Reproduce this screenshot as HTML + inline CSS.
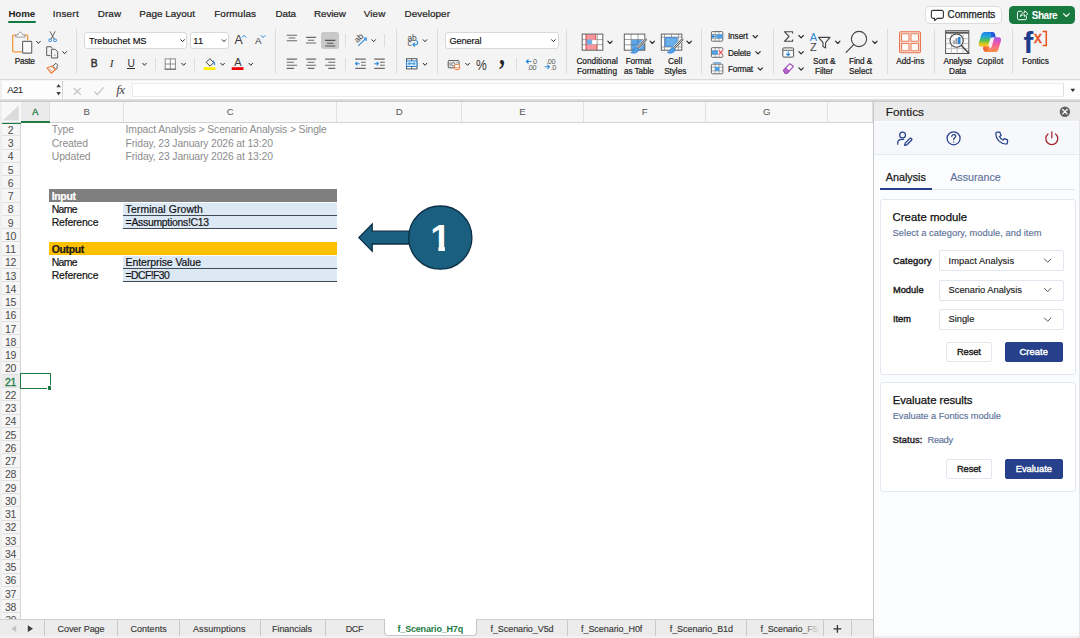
<!DOCTYPE html>
<html lang="en">
<head>
<meta charset="utf-8">
<title>Fontics – Excel</title>
<style>
*{box-sizing:border-box;margin:0;padding:0}
html,body{width:1080px;height:638px;overflow:hidden;background:#f4f4f4}
body{font-family:"Liberation Sans",sans-serif;font-size:11px;color:#222;position:relative}
.abs{position:absolute}
.t{position:absolute;white-space:nowrap;line-height:1}
svg{position:absolute;overflow:visible}
/* tab row */
.mtab{position:absolute;top:8px;font-size:11px;line-height:12px;color:#1f1f1f;letter-spacing:.1px;white-space:nowrap}
/* ribbon */
.sep{position:absolute;top:30px;width:1px;height:44px;background:#dcdcdc}
.box{position:absolute;background:#fff;border:1px solid #d9d9d9;border-radius:3px;height:18px;top:32px;font-size:10px;line-height:16px;padding-left:4px;color:#111}
.lbl{position:absolute;font-size:8.6px;line-height:9.5px;text-align:center;color:#1a1a1a;white-space:nowrap;transform:translateX(-50%);letter-spacing:.05px}
.sm{position:absolute;font-size:8.6px;line-height:10px;color:#1a1a1a;white-space:nowrap}
/* grid */
.ch{position:absolute;top:101.800px;height:20.600px;font-size:9.700px;line-height:20.600px;text-align:center;color:#555;border-right:1px solid #e0e0e0;padding-left:.6px}
.rh{position:absolute;left:2.200px;width:18.400px;height:13.250px;font-size:9.200px;line-height:15.700px;text-align:center;color:#4a4a4a;overflow:hidden}
.c{position:absolute;white-space:nowrap;font-size:10.7px;line-height:13.25px;height:13.25px;color:#000}
.g{color:#8c8c8c}
/* sheet tabs */
.st{position:absolute;top:620px;height:17px;font-size:9.5px;line-height:17px;text-align:center;color:#3a3a3a;border-right:1px solid #c9c9c9;white-space:nowrap}
/* panel */
.card{position:absolute;background:#fff;border:1px solid #e3e7ef;border-radius:3px}
.sel{position:absolute;left:940px;width:124px;height:21px;background:#fff;border:1px solid #e2e6ee;border-radius:2px;font-size:9.4px;line-height:19px;padding-left:8px;color:#1b1b1b}
.flab{position:absolute;left:893px;font-size:9.4px;font-weight:bold;color:#1b1b1b;line-height:11px;letter-spacing:-.1px}
.btn{position:absolute;height:21px;border-radius:2px;font-size:9.4px;font-weight:bold;line-height:19px;text-align:center}
.btn.w{background:#fff;border:1px solid #e2e6ee;color:#1b1b1b}
.btn.p{background:#26408b;border:1px solid #26408b;color:#fff}
</style>
</head>
<body>

<div class="abs" style="left:0;top:0;width:1080px;height:79.300px;background:#f4f4f4"></div>
<div class="t" id="f_mt_Home" style="left:8.40px;top:9.11px;font-size:9.7px;letter-spacing:-0.055px;color:#1f1f1f;font-weight:bold;">Home</div>
<div class="t" id="f_mt_Insert" style="left:52.70px;top:9.10px;font-size:9.9px;letter-spacing:0.249px;color:#1f1f1f;-webkit-text-stroke:.22px #1f1f1f;">Insert</div>
<div class="t" id="f_mt_Draw" style="left:97.80px;top:9.10px;font-size:9.9px;letter-spacing:0.063px;color:#1f1f1f;-webkit-text-stroke:.22px #1f1f1f;">Draw</div>
<div class="t" id="f_mt_PageLayout" style="left:139.30px;top:9.10px;font-size:9.9px;letter-spacing:0.030px;color:#1f1f1f;-webkit-text-stroke:.22px #1f1f1f;">Page Layout</div>
<div class="t" id="f_mt_Formulas" style="left:214.25px;top:9.10px;font-size:9.9px;letter-spacing:0.074px;color:#1f1f1f;-webkit-text-stroke:.22px #1f1f1f;">Formulas</div>
<div class="t" id="f_mt_Data" style="left:275.50px;top:9.10px;font-size:9.9px;letter-spacing:-0.090px;color:#1f1f1f;-webkit-text-stroke:.22px #1f1f1f;">Data</div>
<div class="t" id="f_mt_Review" style="left:314.00px;top:9.10px;font-size:9.9px;letter-spacing:-0.107px;color:#1f1f1f;-webkit-text-stroke:.22px #1f1f1f;">Review</div>
<div class="t" id="f_mt_View" style="left:363.75px;top:9.10px;font-size:9.9px;letter-spacing:0.129px;color:#1f1f1f;-webkit-text-stroke:.22px #1f1f1f;">View</div>
<div class="t" id="f_mt_Developer" style="left:404.50px;top:9.10px;font-size:9.9px;letter-spacing:0.054px;color:#1f1f1f;-webkit-text-stroke:.22px #1f1f1f;">Developer</div>
<div class="abs" style="left:8.300px;top:21.400px;width:27.400px;height:2.100px;background:#107c41;border-radius:1px"></div>
<div class="abs" style="left:924.500px;top:6px;width:77.300px;height:17.700px;background:#fff;border:1px solid #dcdcdc;border-radius:5px"></div>
<div class="t" id="f_comments" style="left:947.60px;top:10.41px;font-size:10px;letter-spacing:-0.082px;color:#1b1b1b;-webkit-text-stroke:.25px #1b1b1b">Comments</div>
<div class="abs" style="left:1009px;top:6px;width:65.800px;height:17.700px;background:#197a40;border-radius:4.500px"></div>
<div class="t" id="f_share" style="left:1031.70px;top:10.50px;font-size:10px;letter-spacing:-0.459px;font-weight:bold;color:#fff">Share</div>
<div class="t" id="f_l_paste" style="left:14.80px;top:58.11px;font-size:8.25px;letter-spacing:-0.242px;color:#1a1a1a;-webkit-text-stroke:.2px #1a1a1a">Paste</div>
<div class="t" id="f_l_cond" style="left:576.40px;top:58.30px;font-size:8.25px;letter-spacing:0.020px;color:#1a1a1a;-webkit-text-stroke:.2px #1a1a1a">Conditional</div>
<div class="t" id="f_l_formg" style="left:576.90px;top:67.61px;font-size:8.25px;letter-spacing:0.076px;color:#1a1a1a;-webkit-text-stroke:.2px #1a1a1a">Formatting</div>
<div class="t" id="f_l_fmt" style="left:625.70px;top:58.30px;font-size:8.25px;letter-spacing:-0.107px;color:#1a1a1a;-webkit-text-stroke:.2px #1a1a1a">Format</div>
<div class="t" id="f_l_astab" style="left:624.00px;top:67.61px;font-size:8.25px;letter-spacing:-0.099px;color:#1a1a1a;-webkit-text-stroke:.2px #1a1a1a">as Table</div>
<div class="t" id="f_l_cell" style="left:668.00px;top:58.30px;font-size:8.25px;letter-spacing:0.020px;color:#1a1a1a;-webkit-text-stroke:.2px #1a1a1a">Cell</div>
<div class="t" id="f_l_styles" style="left:664.20px;top:67.61px;font-size:8.25px;letter-spacing:-0.078px;color:#1a1a1a;-webkit-text-stroke:.2px #1a1a1a">Styles</div>
<div class="t" id="f_l_sort" style="left:813.00px;top:58.30px;font-size:8.25px;letter-spacing:-0.073px;color:#1a1a1a;-webkit-text-stroke:.2px #1a1a1a">Sort &amp;</div>
<div class="t" id="f_l_filter" style="left:815.10px;top:67.61px;font-size:8.25px;letter-spacing:-0.091px;color:#1a1a1a;-webkit-text-stroke:.2px #1a1a1a">Filter</div>
<div class="t" id="f_l_find" style="left:849.00px;top:58.30px;font-size:8.25px;letter-spacing:-0.141px;color:#1a1a1a;-webkit-text-stroke:.2px #1a1a1a">Find &amp;</div>
<div class="t" id="f_l_select" style="left:849.00px;top:67.61px;font-size:8.25px;letter-spacing:0.010px;color:#1a1a1a;-webkit-text-stroke:.2px #1a1a1a">Select</div>
<div class="t" id="f_l_addins" style="left:896.20px;top:58.30px;font-size:8.25px;letter-spacing:0.031px;color:#1a1a1a;-webkit-text-stroke:.2px #1a1a1a">Add-ins</div>
<div class="t" id="f_l_analyse" style="left:943.60px;top:58.30px;font-size:8.25px;letter-spacing:-0.166px;color:#1a1a1a;-webkit-text-stroke:.2px #1a1a1a">Analyse</div>
<div class="t" id="f_l_data" style="left:949.10px;top:67.61px;font-size:8.25px;letter-spacing:-0.159px;color:#1a1a1a;-webkit-text-stroke:.2px #1a1a1a">Data</div>
<div class="t" id="f_l_copilot" style="left:977.00px;top:58.30px;font-size:8.25px;letter-spacing:0.088px;color:#1a1a1a;-webkit-text-stroke:.2px #1a1a1a">Copilot</div>
<div class="t" id="f_l_fontics" style="left:1022.30px;top:58.30px;font-size:8.25px;letter-spacing:-0.013px;color:#1a1a1a;-webkit-text-stroke:.2px #1a1a1a">Fontics</div>
<div class="t" id="f_l_ins" style="left:727.90px;top:33.41px;font-size:8.25px;letter-spacing:-0.090px;color:#1a1a1a;-webkit-text-stroke:.2px #1a1a1a">Insert</div>
<div class="t" id="f_l_del" style="left:727.90px;top:49.61px;font-size:8.25px;letter-spacing:-0.193px;color:#1a1a1a;-webkit-text-stroke:.2px #1a1a1a">Delete</div>
<div class="t" id="f_l_fmt2" style="left:727.90px;top:65.80px;font-size:8.25px;letter-spacing:-0.190px;color:#1a1a1a;-webkit-text-stroke:.2px #1a1a1a">Format</div>
<div class="box" style="left:84.400px;width:103px;height:17.600px;top:31.700px"></div>
<div class="box" style="left:189.800px;width:39.200px;height:17.600px;top:31.700px"></div>
<div class="box" style="left:445.100px;width:113.800px;height:17.600px;top:31.700px"></div>
<div class="t" id="f_treb" style="left:89.00px;top:36.61px;font-size:9.3px;letter-spacing:-0.046px;color:#111;-webkit-text-stroke:.15px #111">Trebuchet MS</div>
<div class="t" id="f_eleven" style="left:193.20px;top:36.61px;font-size:9.3px;letter-spacing:0.322px;color:#111;-webkit-text-stroke:.15px #111">11</div>
<div class="t" id="f_general" style="left:449.50px;top:36.61px;font-size:9.3px;letter-spacing:-0.168px;color:#111;-webkit-text-stroke:.15px #111">General</div>
<div class="t" id="f_bB" style="left:90.70px;top:58.80px;font-size:10.3px;letter-spacing:-1.175px;color:#333;-webkit-text-stroke:.45px #333">B</div>
<div class="t" id="f_bI" style="left:109.80px;top:57.81px;font-size:11.4px;letter-spacing:1.103px;color:#333;font-style:italic;font-family:'Liberation Serif',serif">I</div>
<div class="t" id="f_bU" style="left:127.50px;top:58.80px;font-size:10.3px;letter-spacing:-0.338px;color:#333">U</div>
<div class="abs" style="left:127.400px;top:68px;width:7.200px;height:1px;background:#333"></div>
<div class="t" id="f_bA1" style="left:234.60px;top:33.71px;font-size:12.3px;letter-spacing:-0.603px;color:#3a3a3a">A</div>
<div class="t" id="f_bA2" style="left:254.90px;top:35.71px;font-size:9.8px;letter-spacing:-0.147px;color:#3a3a3a">A</div>
<div class="t" id="f_bA3" style="left:234.20px;top:57.30px;font-size:11px;letter-spacing:-0.244px;color:#3a3a3a">A</div>
<div class="t" id="f_bpct" style="left:476.40px;top:57.50px;font-size:14.8px;letter-spacing:-0.101px;color:#3a3a3a;transform:scaleX(.82);transform-origin:left">%</div>
<div class="t" id="f_bcomma" style="left:498.30px;top:59.11px;font-size:26px;letter-spacing:-1.531px;transform:scale(.88,1.120);transform-origin:left bottom;color:#222;font-weight:bold;font-family:'Liberation Serif',serif">’</div>
<div class="sep" style="left:76.2px;top:28.5px;height:45px"></div>
<div class="sep" style="left:275.2px;top:28.5px;height:45px"></div>
<div class="sep" style="left:396.3px;top:28.5px;height:45px"></div>
<div class="sep" style="left:437px;top:28.5px;height:45px"></div>
<div class="sep" style="left:566.3px;top:28.5px;height:45px"></div>
<div class="sep" style="left:700.8px;top:28.5px;height:45px"></div>
<div class="sep" style="left:772.5px;top:28.5px;height:45px"></div>
<div class="sep" style="left:886.8px;top:28.5px;height:45px"></div>
<div class="sep" style="left:934.3px;top:28.5px;height:45px"></div>
<div class="sep" style="left:1012.4px;top:28.5px;height:45px"></div>
<div class="sep" style="left:155.2px;top:58px;height:12.5px"></div>
<div class="sep" style="left:194.1px;top:58px;height:12.5px"></div>
<div class="sep" style="left:345.2px;top:34.3px;height:12.5px"></div>
<div class="sep" style="left:345.2px;top:58px;height:12.5px"></div>
<div class="sep" style="left:384.1px;top:34.3px;height:12.5px"></div>
<div class="sep" style="left:515.7px;top:58px;height:12.5px"></div>
<div class="abs" style="left:321.4px;top:32px;width:17.7px;height:17.1px;background:#c9c9c9;border-radius:2.5px"></div>
<svg width="1080" height="80" viewBox="0 0 1080 80" style="left:0;top:0">
<path d="M933 10.4h8.8a1.6 1.6 0 0 1 1.6 1.6v4.8a1.6 1.6 0 0 1-1.6 1.6h-4.6l-2.6 2.2v-2.2h-1.6a1.6 1.6 0 0 1-1.6-1.6v-4.8a1.6 1.6 0 0 1 1.6-1.6z" fill="none" stroke="#333" stroke-width="1.1" stroke-linejoin="round"/>
<path d="M1021.5 11.3h-2.6a1.4 1.4 0 0 0-1.4 1.4v5.6a1.4 1.4 0 0 0 1.4 1.4h6.2a1.4 1.4 0 0 0 1.4-1.4v-1.6" fill="none" stroke="#fff" stroke-width="1" stroke-linecap="round"/>
<path d="M1020.3 16.6c.4-2.6 2-3.9 4.3-4v-1.9l3.3 3-3.3 3v-1.9c-1.8 0-3.200.5-4.300 1.800z" fill="none" stroke="#fff" stroke-width=".9" stroke-linejoin="round"/>
<path d="M1063.5 13.6l2.90 2.90l2.90 -2.90" fill="none" stroke="#fff" stroke-width="1.1" stroke-linecap="round" stroke-linejoin="round"/>
<path d="M16.600 35.200h-3.200a.7.7 0 0 0-.7.7v15.200a.7.7 0 0 0 .7.7h8.400M24.200 35.200h2.800a.7.7 0 0 1 .7.7v4.200" fill="none" stroke="#f2993f" stroke-width="1.300"/>
<path d="M15.700 37.100v-2.300h2.400c.2-1.700 1.100-2.600 2.200-2.600s2 .9 2.200 2.600h2.400v2.300z" fill="#f8f8f8" stroke="#8e8e8e" stroke-width=".85" stroke-linejoin="round"/>
<rect x="22.600" y="41.300" width="9.100" height="11.900" rx=".7" fill="#fafafa" stroke="#6a6a6a" stroke-width="1.150"/>
<path d="M36.6 41.4l1.80 2.00l1.80 -2.00" fill="none" stroke="#2a2a2a" stroke-width="1.0" stroke-linecap="round" stroke-linejoin="round"/>
<path d="M50 31.400l4.200 7.700M55.200 31.400l-4.200 7.700" fill="none" stroke="#555" stroke-width=".95"/>
<ellipse cx="50.100" cy="40.300" rx="1.500" ry="1.300" fill="none" stroke="#2b88d8" stroke-width=".95"/><ellipse cx="55.100" cy="40.300" rx="1.500" ry="1.300" fill="none" stroke="#2b88d8" stroke-width=".95"/>
<path d="M50.300 55.600h-3.600v-8.800h4.500l1.400 1.400" fill="none" stroke="#5a5a5a" stroke-width="1"/>
<path d="M51.400 49.300h3.700l2.600 2.600v6.100h-6.300z" fill="#f4f4f4" stroke="#5a5a5a" stroke-width="1" stroke-linejoin="round"/><path d="M53.900 55.200h1.800M54.800 54.300v1.800" stroke="#aaa" stroke-width=".7"/>
<path d="M62.8 51.7l1.80 2.00l1.80 -2.00" fill="none" stroke="#2a2a2a" stroke-width="1.0" stroke-linecap="round" stroke-linejoin="round"/>
<path d="M52.600 66.200l3.300-3 2.100 2.300-1.400 1.200.9 1.500-1.500 1.300z" fill="#f4f4f4" stroke="#4a4a4a" stroke-width=".9" stroke-linejoin="round"/>
<path d="M47 68l5-1.900 3.400 3.700-4.200 3.400z" fill="none" stroke="#f0793a" stroke-width="1.100" stroke-linejoin="round"/><path d="M49.500 69l2.600 2.600" stroke="#f0793a" stroke-width=".7"/>
<path d="M180.8 39.7l1.80 2.00l1.80 -2.00" fill="none" stroke="#2a2a2a" stroke-width="1.0" stroke-linecap="round" stroke-linejoin="round"/>
<path d="M222.2 39.7l1.80 2.00l1.80 -2.00" fill="none" stroke="#2a2a2a" stroke-width="1.0" stroke-linecap="round" stroke-linejoin="round"/>
<path d="M551.6 39.7l1.80 2.00l1.80 -2.00" fill="none" stroke="#2a2a2a" stroke-width="1.0" stroke-linecap="round" stroke-linejoin="round"/>
<path d="M242.200 37.300l1.900-2 1.900 2" fill="none" stroke="#2b88d8" stroke-width="1" stroke-linecap="round" stroke-linejoin="round"/>
<path d="M261.200 35.600l1.900 2 1.900-2" fill="none" stroke="#2b88d8" stroke-width="1" stroke-linecap="round" stroke-linejoin="round"/>
<path d="M142.7 63.3l1.80 2.00l1.80 -2.00" fill="none" stroke="#2a2a2a" stroke-width="1.0" stroke-linecap="round" stroke-linejoin="round"/>
<rect x="165.200" y="58.900" width="10.200" height="10.200" fill="#fdfdfd" stroke="#8a8a8a" stroke-width="1"/><path d="M170.300 58.900v10.200M165.200 64h10.200" stroke="#8a8a8a" stroke-width="1"/><path d="M164.700 69.300h11.200" stroke="#777" stroke-width="1.200"/>
<path d="M181.8 63.3l1.80 2.00l1.80 -2.00" fill="none" stroke="#2a2a2a" stroke-width="1.0" stroke-linecap="round" stroke-linejoin="round"/>
<path d="M209.800 58.700l3.900 3.900-3.600 3.600-3.900-3.900z" fill="none" stroke="#444" stroke-width="1" stroke-linejoin="round"/>
<path d="M213.300 61.200c1 .8 1.400 1.800 1.200 3.300" fill="none" stroke="#2b88d8" stroke-width="1.300" stroke-linecap="round"/>
<rect x="203.700" y="67.200" width="11.700" height="2.800" fill="#ffef00"/>
<path d="M220.8 63.3l1.80 2.00l1.80 -2.00" fill="none" stroke="#2a2a2a" stroke-width="1.0" stroke-linecap="round" stroke-linejoin="round"/>
<rect x="231.700" y="67.200" width="11.800" height="2.800" fill="#f00000"/>
<path d="M249.0 63.3l1.80 2.00l1.80 -2.00" fill="none" stroke="#2a2a2a" stroke-width="1.0" stroke-linecap="round" stroke-linejoin="round"/>
<path d="M286.7 35.3H297.1M288.6 38.0H295.3M286.7 40.8H297.1" stroke="#6a6a6a" stroke-width="1.1" fill="none"/>
<path d="M306.0 37.4H316.1M307.9 40.2H314.3M306.0 43.0H316.1" stroke="#6a6a6a" stroke-width="1.1" fill="none"/>
<path d="M325.1 40.4H335.3M326.9 43.2H333.6M325.1 46.0H335.3" stroke="#555" stroke-width="1.1" fill="none"/>
<path d="M286.7 59.1H297.1M286.7 62.2H294.0M286.7 65.3H297.1M286.7 68.4H294.0" stroke="#6a6a6a" stroke-width="1.1" fill="none"/>
<path d="M306.0 59.1H316.1M307.7 62.2H314.4M306.0 65.3H316.1M307.7 68.4H314.4" stroke="#6a6a6a" stroke-width="1.1" fill="none"/>
<path d="M325.1 59.1H335.3M328.2 62.2H335.3M325.1 65.3H335.3M328.2 68.4H335.3" stroke="#6a6a6a" stroke-width="1.1" fill="none"/>
<text x="0" y="0" transform="translate(357.600 43.300) rotate(-47)" font-size="8.400" fill="#444" font-family="Liberation Sans, sans-serif">ab</text>
<path d="M358.200 45.800l7.800-7.500" stroke="#2b88d8" stroke-width="1.050" fill="none"/><path d="M363.300 38l3-.1-.1 3" stroke="#2b88d8" stroke-width="1.050" fill="none" stroke-linejoin="round"/>
<path d="M371.9 39.7l1.80 2.00l1.80 -2.00" fill="none" stroke="#2a2a2a" stroke-width="1.0" stroke-linecap="round" stroke-linejoin="round"/>
<path d="M355.2 59.1H365.8M361.0 62.2H365.8M361.0 65.3H365.8M355.2 68.4H365.8" stroke="#6a6a6a" stroke-width="1.1" fill="none"/><path d="M359.7 63.75H355.5M357.3 62.0l-1.800 1.700 1.800 1.700" stroke="#2b88d8" stroke-width="1.100" fill="none" stroke-linejoin="round"/>
<path d="M374.2 59.1H384.8M380.0 62.2H384.8M380.0 65.3H384.8M374.2 68.4H384.8" stroke="#6a6a6a" stroke-width="1.1" fill="none"/><path d="M374.2 63.75H378.5M376.7 62.0l1.800 1.700-1.800 1.700" stroke="#2b88d8" stroke-width="1.100" fill="none" stroke-linejoin="round"/>
<text x="407.400" y="40.600" font-size="8.400" fill="#444" font-family="Liberation Sans, sans-serif">ab</text><text x="407.400" y="46.300" font-size="8.400" fill="#444" font-family="Liberation Sans, sans-serif">c</text>
<path d="M416.600 40.800c1.600.7 1.700 3.600-.6 3.900h-3M414.600 43l-1.700 1.700 1.700 1.700" stroke="#2b88d8" stroke-width="1.100" fill="none" stroke-linejoin="round" stroke-linecap="round"/>
<path d="M423.2 39.7l1.80 2.00l1.80 -2.00" fill="none" stroke="#2a2a2a" stroke-width="1.0" stroke-linecap="round" stroke-linejoin="round"/>
<rect x="406.500" y="58.700" width="10.400" height="10.200" fill="#fdfdfd" stroke="#555" stroke-width="1"/>
<rect x="406.500" y="60.900" width="10.400" height="5.600" fill="#d6e8f8" stroke="#2b88d8" stroke-width="1"/>
<path d="M408.400 63.700h6.600M409.800 62.300l-1.400 1.400 1.400 1.400M413.600 62.300l1.400 1.400-1.400 1.400" stroke="#2b88d8" stroke-width=".9" fill="none"/>
<path d="M411.700 58.700v2.200M411.700 66.500v2.400" stroke="#555" stroke-width=".9"/>
<path d="M423.2 63.3l1.80 2.00l1.80 -2.00" fill="none" stroke="#2a2a2a" stroke-width="1.0" stroke-linecap="round" stroke-linejoin="round"/>
<rect x="448.200" y="60.600" width="10.800" height="7.200" rx=".8" fill="none" stroke="#555" stroke-width="1"/><circle cx="453.200" cy="64.200" r="1.700" fill="none" stroke="#555" stroke-width=".8"/><path d="M450 62.200v4M457 62.200v1" stroke="#555" stroke-width=".7"/>
<path d="M454.600 65.300c0-1.300 5-1.300 5 0v3.500c0 1.300-5 1.300-5 0z" fill="#fff" stroke="#f0793a" stroke-width="1"/><path d="M454.600 67c0 1.200 5 1.200 5 0" fill="none" stroke="#f0793a" stroke-width=".9"/>
<path d="M465.6 63.2l2.00 2.10l2.00 -2.10" fill="none" stroke="#2a2a2a" stroke-width="1" stroke-linecap="round" stroke-linejoin="round"/>
<path d="M531.400 61.500h-4.800M528.500 59.500l-2.100 2 2.100 2" stroke="#2b88d8" stroke-width="1.100" fill="none" stroke-linejoin="round"/>
<text x="533.100" y="63.700" font-size="7.300" fill="#5a5a5a" font-family="Liberation Sans, sans-serif" letter-spacing="-.45">0</text><text x="527.300" y="69.600" font-size="7.300" fill="#5a5a5a" font-family="Liberation Sans, sans-serif" letter-spacing="-.45">.00</text>
<path d="M544.600 66.800h4.800M547.400 64.800l2.100 2-2.100 2" stroke="#2b88d8" stroke-width="1.100" fill="none" stroke-linejoin="round"/>
<text x="546.300" y="63.700" font-size="7.300" fill="#5a5a5a" font-family="Liberation Sans, sans-serif" letter-spacing="-.45">.00</text><text x="550.800" y="69.600" font-size="7.300" fill="#5a5a5a" font-family="Liberation Sans, sans-serif" letter-spacing="-.45">.0</text>
<rect x="582.2" y="34.1" width="20.6" height="16.1" fill="#fff"/>
<path d="M586.1 34.1V50.2M591.7 34.1V50.2M597.2 34.1V50.2M582.2 39.6H602.8M582.2 44.7H602.8" stroke="#8c8c8c" stroke-width=".8" fill="none"/>
<rect x="586.1" y="34.5" width="9.500" height="5.1" fill="#f9949c"/>
<rect x="586.1" y="39.6" width="5.600" height="5.1" fill="#6aaeea"/>
<rect x="586.1" y="44.7" width="10.600" height="5.1" fill="#f9949c"/>
<path d="M586.1 34.1V50.2M595.6 34.1V39.6M596.7 44.7V50.2" stroke="#e8473f" stroke-width=".9" fill="none"/>
<rect x="582.2" y="34.1" width="20.6" height="16.1" fill="none" stroke="#5f5f5f" stroke-width="1"/>
<path d="M607.8 41.2l2.20 2.30l2.20 -2.30" fill="none" stroke="#2a2a2a" stroke-width="1.15" stroke-linecap="round" stroke-linejoin="round"/>
<rect x="624.3" y="34.1" width="20.5" height="16.1" fill="#fff"/>
<rect x="631.1" y="39.5" width="13.7" height="10.7" fill="#5ba4e8"/>
<path d="M631.1 34.1v16.1M638.0 34.1v16.1M624.3 39.5h20.5M624.3 44.8h20.5" stroke="#8c8c8c" stroke-width=".8" fill="none"/>
<path d="M638.0 39.5v10.7M631.1 44.8h13.7" stroke="#3a86d4" stroke-width=".8" fill="none"/>
<rect x="624.3" y="34.1" width="20.5" height="16.1" fill="none" stroke="#5f5f5f" stroke-width="1"/>
<path d="M645.8 39.5L637.5 48.2" stroke="#f4f4f4" stroke-width="3.400" stroke-linecap="round"/><path d="M645.8 39.5L637.5 48.2" stroke="#4a4a4a" stroke-width="2.300" stroke-linecap="round"/><path d="M645.8 39.5L637.5 48.2" stroke="#fafafa" stroke-width=".9" stroke-linecap="round"/><path d="M637.7 48.0c-1.700-.9-3.500-.1-4.100 1.600-.5 1.400-1.300 2.300-3 2.900 2.600 1.300 6.100.9 7.700-1.400.8-1.100.6-2.300-.6-3.100z" fill="#4f9fe6" stroke="#2b78c8" stroke-width=".6"/>
<path d="M650.1 41.2l2.20 2.30l2.20 -2.30" fill="none" stroke="#2a2a2a" stroke-width="1.15" stroke-linecap="round" stroke-linejoin="round"/>
<rect x="661.3" y="34.1" width="20.5" height="16.1" fill="#fff"/>
<path d="M664.5 34.1v16.1M678.4 34.1v16.1M671.5 34.1v3M661.3 37.1h20.5M661.3 47.0h20.5" stroke="#8c8c8c" stroke-width=".8" fill="none"/>
<rect x="665.1" y="37.7" width="12.0" height="8.6" fill="#6aaeea" stroke="#2b78c8" stroke-width=".8"/>
<rect x="661.3" y="34.1" width="20.5" height="16.1" fill="none" stroke="#5f5f5f" stroke-width="1"/>
<path d="M682.3 39.5L674.0 48.2" stroke="#f4f4f4" stroke-width="3.400" stroke-linecap="round"/><path d="M682.3 39.5L674.0 48.2" stroke="#4a4a4a" stroke-width="2.300" stroke-linecap="round"/><path d="M682.3 39.5L674.0 48.2" stroke="#fafafa" stroke-width=".9" stroke-linecap="round"/><path d="M674.2 48.0c-1.700-.9-3.500-.1-4.100 1.600-.5 1.400-1.300 2.300-3 2.900 2.600 1.300 6.100.9 7.700-1.400.8-1.100.6-2.300-.6-3.100z" fill="#4f9fe6" stroke="#2b78c8" stroke-width=".6"/>
<path d="M687.0 41.2l2.20 2.30l2.20 -2.30" fill="none" stroke="#2a2a2a" stroke-width="1.15" stroke-linecap="round" stroke-linejoin="round"/>
<rect x="711.4" y="31.6" width="11.4" height="9.6" rx="1" fill="#fbfbfb" stroke="#666" stroke-width="1"/><path d="M715.2 31.6v9.6M719.0 31.6v9.6M711.4 34.5h11.4M711.4 38.3h11.4" stroke="#888" stroke-width=".7" fill="none"/><rect x="716.2" y="34.5" width="6.6" height="3.8" fill="#4f9fe6"/><path d="M715.9 36.4h-4M713.7 34.7l-1.800 1.700 1.800 1.700" stroke="#2b88d8" stroke-width="1.100" fill="none" stroke-linejoin="round"/>
<path d="M753.1 35.5l2.20 2.30l2.20 -2.30" fill="none" stroke="#2a2a2a" stroke-width="1.15" stroke-linecap="round" stroke-linejoin="round"/>
<rect x="711.4" y="47.7" width="11.4" height="9.6" rx="1" fill="#fbfbfb" stroke="#666" stroke-width="1"/><path d="M715.2 47.7v9.6M719.0 47.7v9.6M711.4 50.6h11.4M711.4 54.4h11.4" stroke="#888" stroke-width=".7" fill="none"/><rect x="711.9" y="50.6" width="6.3" height="3.8" fill="#4f9fe6"/><rect x="718.0" y="49.8" width="5.7" height="5.4" fill="#f8f8f8"/><path d="M718.7 50.3l4 4.400M722.7 50.3l-4 4.400" stroke="#e8473f" stroke-width="1.100" fill="none"/>
<path d="M755.8 51.6l2.20 2.30l2.20 -2.30" fill="none" stroke="#2a2a2a" stroke-width="1.15" stroke-linecap="round" stroke-linejoin="round"/>
<rect x="711.4" y="64.2" width="11.4" height="9.6" rx="1" fill="#fbfbfb" stroke="#666" stroke-width="1"/><path d="M715.2 64.2v9.6M719.0 64.2v9.6M711.4 67.1h11.4M711.4 70.9h11.4" stroke="#888" stroke-width=".7" fill="none"/><rect x="714.8" y="67.1" width="4.6" height="3.8" fill="#4f9fe6"/><path d="M713.4 62.9h7.4" stroke="#2b88d8" stroke-width="1"/>
<path d="M758.1 67.8l2.20 2.30l2.20 -2.30" fill="none" stroke="#2a2a2a" stroke-width="1.15" stroke-linecap="round" stroke-linejoin="round"/>
<path d="M792.600 33.400v-1.700h-8.200l4.600 4.800-4.600 4.800h8.200v-1.700" fill="none" stroke="#444" stroke-width="1.100" stroke-linejoin="round"/>
<path d="M798.9 35.5l2.20 2.30l2.20 -2.30" fill="none" stroke="#2a2a2a" stroke-width="1.15" stroke-linecap="round" stroke-linejoin="round"/>
<rect x="782.800" y="47.900" width="10.800" height="9.200" rx="1" fill="#fbfbfb" stroke="#555" stroke-width="1"/><path d="M782.800 50.300h10.800" stroke="#555" stroke-width=".9"/>
<path d="M788.200 51.400v4M786.300 53.700l1.900 1.900 1.900-1.900" stroke="#2b88d8" stroke-width="1.100" fill="none" stroke-linejoin="round"/>
<path d="M798.9 51.6l2.20 2.30l2.20 -2.30" fill="none" stroke="#2a2a2a" stroke-width="1.15" stroke-linecap="round" stroke-linejoin="round"/>
<path d="M783.400 70.300l6.400-6.600 3.600 2.600-6.200 7h-2.200z" fill="#fbf4fd" stroke="#a24bb8" stroke-width="1.100" stroke-linejoin="round"/><path d="M783.400 70.300l2.200-2.200 3.600 2.900-2 2.300h-2.200z" fill="#b866cc" stroke="#a24bb8" stroke-width="1" stroke-linejoin="round"/>
<path d="M798.9 67.8l2.20 2.30l2.20 -2.30" fill="none" stroke="#2a2a2a" stroke-width="1.15" stroke-linecap="round" stroke-linejoin="round"/>
<text x="809.700" y="40.600" font-size="11" fill="#2b88d8" font-family="Liberation Sans, sans-serif">A</text>
<text x="809.900" y="51.400" font-size="11" fill="#444" font-family="Liberation Sans, sans-serif">Z</text>
<path d="M818.600 37.400h11.400l-4.400 5.200v5.400l-2.600-1.400v-4z" fill="none" stroke="#444" stroke-width="1.100" stroke-linejoin="round"/>
<path d="M835.6 41.2l2.20 2.30l2.20 -2.30" fill="none" stroke="#2a2a2a" stroke-width="1.15" stroke-linecap="round" stroke-linejoin="round"/>
<circle cx="859" cy="39" r="7.600" fill="none" stroke="#444" stroke-width="1.100"/><path d="M853.600 44.600l-7.400 7.800" stroke="#444" stroke-width="1.200" stroke-linecap="round"/>
<path d="M872.7 41.2l2.20 2.30l2.20 -2.30" fill="none" stroke="#2a2a2a" stroke-width="1.15" stroke-linecap="round" stroke-linejoin="round"/>
<rect x="899.600" y="31.700" width="20.800" height="21" rx="1.200" fill="#fbe3da" stroke="#e8704a" stroke-width="1.100"/>
<rect x="901.6" y="33.8" width="7.400" height="7.400" fill="#fdfaf8" stroke="#e8704a" stroke-width=".9"/>
<rect x="911" y="33.8" width="7.400" height="7.400" fill="#fdfaf8" stroke="#e8704a" stroke-width=".9"/>
<rect x="901.6" y="43.4" width="7.400" height="7.400" fill="#fdfaf8" stroke="#e8704a" stroke-width=".9"/>
<rect x="911" y="43.4" width="7.400" height="7.400" fill="#fdfaf8" stroke="#e8704a" stroke-width=".9"/>
<rect x="945.6" y="30.7" width="23.2" height="22.8" fill="#fcfcfc" stroke="#555" stroke-width="1"/>
<path d="M945.6 32.7h23.2" stroke="#555" stroke-width="2"/>
<path d="M951.4 33.7v19.8M957.2 33.7v19.8M963.0 33.7v19.8M945.6 38.7h23.2M945.6 43.6h23.2M945.6 48.6h23.2" stroke="#aaa" stroke-width=".7" fill="none"/>
<circle cx="956.600" cy="40.600" r="6.600" fill="#fcfcfc" stroke="#444" stroke-width="1.100"/>
<rect x="952.800" y="40.400" width="2.200" height="3.800" fill="#aaa"/><rect x="955.400" y="38.200" width="2.200" height="6" fill="#999"/><rect x="958" y="37" width="2.600" height="7.200" fill="#2b88d8"/>
<path d="M961.400 45.400l7.200 7.600" stroke="#444" stroke-width="1.400" stroke-linecap="round"/>
<linearGradient id="cpA" x1="0" y1="0" x2="0" y2="1"><stop offset="0" stop-color="#1c7fe6"/><stop offset=".3" stop-color="#23a6e0"/><stop offset=".6" stop-color="#55bf4e"/><stop offset=".85" stop-color="#e9c81e"/><stop offset="1" stop-color="#f6b21c"/></linearGradient>
<linearGradient id="cpB" x1="0" y1="0" x2="0" y2="1"><stop offset="0" stop-color="#a953ea"/><stop offset=".35" stop-color="#e456b4"/><stop offset=".7" stop-color="#f8747a"/><stop offset="1" stop-color="#f9903e"/></linearGradient>
<linearGradient id="cpC" x1="0" y1="0" x2="1" y2="0"><stop offset="0" stop-color="#f0542a"/><stop offset="1" stop-color="#f98a3c"/></linearGradient>
<path d="M983.600 46.200h6.600l-1.300 4.400c-.5 1.500-2.900 2-4.500.6-1.500-1.300-1.700-3.400-.8-5z" fill="url(#cpC)"/>
<path d="M989.200 37.300h9.200c2.100 0 3.100 1.600 2.500 3.600l-2.500 8.500c-.6 1.800-1.800 2.600-3.600 2.600h-6.400c-1.300 0-2.300-.6-2.800-1.500 1.500.7 2.800.1 3.300-1.600l2.600-9c.4-1.500 1.300-2.300 2.700-2.600z" fill="url(#cpB)"/>
<path d="M985 31.900h6.900c1.600 0 2.600.8 3 2l.7 3.400h-2.800c-1.400 0-2.400.8-2.800 2.200l-2 7h-6.600c-2.200 0-3.200-1.600-2.600-3.600l2.600-8.400c.6-1.800 1.800-2.600 3.600-2.600z" fill="url(#cpA)"/>
<path d="M991.900 31.900c1.600 0 2.600.8 3 2l.7 3.400h-4.900l.4-1.500c.4-1.600.2-3-1.200-3.900z" fill="#2458d8"/>
<path d="M991.400 38.600c.8-.9 1.800-1.200 3-1.200l-2.700 9.200c-.5 1.400-1.400 2-2.700 2z" fill="#fff" opacity=".85"/>
<text x="1023.400" y="53" font-size="29.500" font-weight="bold" fill="#1f3c8c" font-family="Liberation Sans, sans-serif">f</text>
<text x="1034.100" y="42.600" font-size="15.600" fill="#e8501c" stroke="#e8501c" stroke-width=".5" font-family="Liberation Sans, sans-serif">x</text>
<path d="M1042.600 31.600h3.700v13.800h-3.700" fill="none" stroke="#e8501c" stroke-width="1.500"/>
</svg>

<div class="abs" style="left:0;top:79.300px;width:1080px;height:1.200px;background:#d9d9d9"></div>
<div class="abs" style="left:0;top:80.500px;width:1080px;height:18.700px;background:#fdfdfd"></div>
<div class="abs" style="left:0;top:80.500px;width:2px;height:18.700px;background:#f0f0f0"></div>
<div class="abs" style="left:62px;top:80.500px;width:1px;height:18.700px;background:#d4d4d4"></div>
<div class="abs" style="left:63px;top:80.500px;width:69px;height:18.700px;background:#fafafa"></div>
<div class="abs" style="left:132.400px;top:83.400px;width:932px;height:13.800px;background:#fff;border:1px solid #ececec;border-right:1px solid #dedede"></div>
<div class="t" id="f_a21" style="left:7.20px;top:84.90px;font-size:9.7px;letter-spacing:-0.617px;color:#222">A21</div>
<div class="t" style="left:116.200px;top:82.600px;font-size:13px;font-style:italic;font-family:'Liberation Serif',serif;color:#444;letter-spacing:-.6px">fx</div>
<svg width="1080" height="24" viewBox="0 78 1080 24" style="left:0;top:78px"><path d="M56.300 87.300l2.300-3.400 2.300 3.400zM56.300 91.900l2.300 3.500 2.300-3.500z" fill="#444"/><path d="M73.700 88l7.200 6.800M80.900 88l-7.200 6.800" stroke="#c2c2c2" stroke-width="1.100" fill="none"/><path d="M94.400 91.500l3 3.200 6.200-7.400" stroke="#c2c2c2" stroke-width="1.100" fill="none"/><path d="M1070.400 88.700h4.800l-2.400 3.400z" fill="#333"/></svg>
<div class="abs" style="left:0;top:99.200px;width:1080px;height:2.600px;background:linear-gradient(#e6e6e6,#c8c8c8)"></div>
<div class="abs" style="left:0;top:101.800px;width:874px;height:518px;background:#fff"></div>
<div class="abs" style="left:0;top:101.800px;width:874px;height:20.600px;background:#f8f8f8"></div>
<div class="abs" style="left:0;top:122px;width:874px;height:1px;background:#d2d2d2"></div>
<div class="abs" style="left:0;top:123.0px;width:20.600px;height:497px;background:#f6f6f6;border-right:1px solid #d4d4d4"></div>
<div class="abs" style="left:0;top:101.800px;width:2.200px;height:518px;background:#eeeeee"></div>
<svg width="21" height="21" viewBox="0 102 21 21" style="left:0;top:102px"><path d="M18.700 105.500v15h-15.900z" fill="#dbdbdb"/></svg>
<div class="ch" style="left:20.6px;width:29.60px;background:#ebebeb;color:#1e7b45;-webkit-text-stroke:.3px #1e7b45;">A</div>
<div class="ch" style="left:50.2px;width:73.40px;">B</div>
<div class="ch" style="left:123.6px;width:213.90px;">C</div>
<div class="ch" style="left:337.5px;width:124.00px;">D</div>
<div class="ch" style="left:461.5px;width:122.40px;">E</div>
<div class="ch" style="left:583.9px;width:122.10px;">F</div>
<div class="ch" style="left:706px;width:122.20px;">G</div>
<div class="ch" style="left:828.2px;width:45.30px;"></div>
<div class="abs" style="left:20.800px;top:121.400px;width:29px;height:1.700px;background:#1e7b45"></div>
<div class="abs" style="left:1.900px;top:122.800px;width:19px;height:1.200px;background:#1e7b45"></div>
<div class="t" id="f_r2" style="left:7.75px;top:124.75px;font-size:10.5px;letter-spacing:-0.144px;color:#4a4a4a;">2</div>
<div class="abs" style="left:2px;top:135.25px;width:18.500px;height:.8px;background:#e0e0e0"></div>
<div class="t" id="f_r3" style="left:7.75px;top:138.00px;font-size:10.5px;letter-spacing:-0.144px;color:#4a4a4a;">3</div>
<div class="abs" style="left:2px;top:148.50px;width:18.500px;height:.8px;background:#e0e0e0"></div>
<div class="t" id="f_r4" style="left:7.75px;top:151.25px;font-size:10.5px;letter-spacing:-0.144px;color:#4a4a4a;">4</div>
<div class="abs" style="left:2px;top:161.75px;width:18.500px;height:.8px;background:#e0e0e0"></div>
<div class="t" id="f_r5" style="left:7.75px;top:164.50px;font-size:10.5px;letter-spacing:-0.144px;color:#4a4a4a;">5</div>
<div class="abs" style="left:2px;top:175.00px;width:18.500px;height:.8px;background:#e0e0e0"></div>
<div class="t" id="f_r6" style="left:7.75px;top:177.75px;font-size:10.5px;letter-spacing:-0.144px;color:#4a4a4a;">6</div>
<div class="abs" style="left:2px;top:188.25px;width:18.500px;height:.8px;background:#e0e0e0"></div>
<div class="t" id="f_r7" style="left:7.75px;top:191.00px;font-size:10.5px;letter-spacing:-0.144px;color:#4a4a4a;">7</div>
<div class="abs" style="left:2px;top:201.50px;width:18.500px;height:.8px;background:#e0e0e0"></div>
<div class="t" id="f_r8" style="left:7.75px;top:204.25px;font-size:10.5px;letter-spacing:-0.144px;color:#4a4a4a;">8</div>
<div class="abs" style="left:2px;top:214.75px;width:18.500px;height:.8px;background:#e0e0e0"></div>
<div class="t" id="f_r9" style="left:7.75px;top:217.50px;font-size:10.5px;letter-spacing:-0.144px;color:#4a4a4a;">9</div>
<div class="abs" style="left:2px;top:228.00px;width:18.500px;height:.8px;background:#e0e0e0"></div>
<div class="t" id="f_r10" style="left:4.90px;top:230.75px;font-size:10.5px;letter-spacing:-0.144px;color:#4a4a4a;">10</div>
<div class="abs" style="left:2px;top:241.25px;width:18.500px;height:.8px;background:#e0e0e0"></div>
<div class="t" id="f_r11" style="left:4.90px;top:244.00px;font-size:10.5px;letter-spacing:0.247px;color:#4a4a4a;">11</div>
<div class="abs" style="left:2px;top:254.50px;width:18.500px;height:.8px;background:#e0e0e0"></div>
<div class="t" id="f_r12" style="left:4.90px;top:257.25px;font-size:10.5px;letter-spacing:-0.144px;color:#4a4a4a;">12</div>
<div class="abs" style="left:2px;top:267.75px;width:18.500px;height:.8px;background:#e0e0e0"></div>
<div class="t" id="f_r13" style="left:4.90px;top:270.50px;font-size:10.5px;letter-spacing:-0.144px;color:#4a4a4a;">13</div>
<div class="abs" style="left:2px;top:281.00px;width:18.500px;height:.8px;background:#e0e0e0"></div>
<div class="t" id="f_r14" style="left:4.90px;top:283.75px;font-size:10.5px;letter-spacing:-0.144px;color:#4a4a4a;">14</div>
<div class="abs" style="left:2px;top:294.25px;width:18.500px;height:.8px;background:#e0e0e0"></div>
<div class="t" id="f_r15" style="left:4.90px;top:297.00px;font-size:10.5px;letter-spacing:-0.144px;color:#4a4a4a;">15</div>
<div class="abs" style="left:2px;top:307.50px;width:18.500px;height:.8px;background:#e0e0e0"></div>
<div class="t" id="f_r16" style="left:4.90px;top:310.25px;font-size:10.5px;letter-spacing:-0.144px;color:#4a4a4a;">16</div>
<div class="abs" style="left:2px;top:320.75px;width:18.500px;height:.8px;background:#e0e0e0"></div>
<div class="t" id="f_r17" style="left:4.90px;top:323.50px;font-size:10.5px;letter-spacing:-0.144px;color:#4a4a4a;">17</div>
<div class="abs" style="left:2px;top:334.00px;width:18.500px;height:.8px;background:#e0e0e0"></div>
<div class="t" id="f_r18" style="left:4.90px;top:336.75px;font-size:10.5px;letter-spacing:-0.144px;color:#4a4a4a;">18</div>
<div class="abs" style="left:2px;top:347.25px;width:18.500px;height:.8px;background:#e0e0e0"></div>
<div class="t" id="f_r19" style="left:4.90px;top:350.00px;font-size:10.5px;letter-spacing:-0.144px;color:#4a4a4a;">19</div>
<div class="abs" style="left:2px;top:360.50px;width:18.500px;height:.8px;background:#e0e0e0"></div>
<div class="t" id="f_r20" style="left:4.90px;top:363.25px;font-size:10.5px;letter-spacing:-0.144px;color:#4a4a4a;">20</div>
<div class="abs" style="left:2.200px;top:374.15px;width:18.200px;height:13.25px;background:#ebebeb"></div>
<div class="abs" style="left:2px;top:373.75px;width:18.500px;height:.8px;background:#e0e0e0"></div>
<div class="t" id="f_r21" style="left:4.90px;top:376.50px;font-size:10.5px;letter-spacing:-0.144px;color:#1e7b45;-webkit-text-stroke:.3px #1e7b45;">21</div>
<div class="abs" style="left:2px;top:387.00px;width:18.500px;height:.8px;background:#e0e0e0"></div>
<div class="t" id="f_r22" style="left:4.90px;top:389.75px;font-size:10.5px;letter-spacing:-0.144px;color:#4a4a4a;">22</div>
<div class="abs" style="left:2px;top:400.25px;width:18.500px;height:.8px;background:#e0e0e0"></div>
<div class="t" id="f_r23" style="left:4.90px;top:403.00px;font-size:10.5px;letter-spacing:-0.144px;color:#4a4a4a;">23</div>
<div class="abs" style="left:2px;top:413.50px;width:18.500px;height:.8px;background:#e0e0e0"></div>
<div class="t" id="f_r24" style="left:4.90px;top:416.25px;font-size:10.5px;letter-spacing:-0.144px;color:#4a4a4a;">24</div>
<div class="abs" style="left:2px;top:426.75px;width:18.500px;height:.8px;background:#e0e0e0"></div>
<div class="t" id="f_r25" style="left:4.90px;top:429.50px;font-size:10.5px;letter-spacing:-0.144px;color:#4a4a4a;">25</div>
<div class="abs" style="left:2px;top:440.00px;width:18.500px;height:.8px;background:#e0e0e0"></div>
<div class="t" id="f_r26" style="left:4.90px;top:442.75px;font-size:10.5px;letter-spacing:-0.144px;color:#4a4a4a;">26</div>
<div class="abs" style="left:2px;top:453.25px;width:18.500px;height:.8px;background:#e0e0e0"></div>
<div class="t" id="f_r27" style="left:4.90px;top:456.00px;font-size:10.5px;letter-spacing:-0.144px;color:#4a4a4a;">27</div>
<div class="abs" style="left:2px;top:466.50px;width:18.500px;height:.8px;background:#e0e0e0"></div>
<div class="t" id="f_r28" style="left:4.90px;top:469.25px;font-size:10.5px;letter-spacing:-0.144px;color:#4a4a4a;">28</div>
<div class="abs" style="left:2px;top:479.75px;width:18.500px;height:.8px;background:#e0e0e0"></div>
<div class="t" id="f_r29" style="left:4.90px;top:482.50px;font-size:10.5px;letter-spacing:-0.144px;color:#4a4a4a;">29</div>
<div class="abs" style="left:2px;top:493.00px;width:18.500px;height:.8px;background:#e0e0e0"></div>
<div class="t" id="f_r30" style="left:4.90px;top:495.75px;font-size:10.5px;letter-spacing:-0.144px;color:#4a4a4a;">30</div>
<div class="abs" style="left:2px;top:506.25px;width:18.500px;height:.8px;background:#e0e0e0"></div>
<div class="t" id="f_r31" style="left:4.90px;top:509.00px;font-size:10.5px;letter-spacing:-0.144px;color:#4a4a4a;">31</div>
<div class="abs" style="left:2px;top:519.50px;width:18.500px;height:.8px;background:#e0e0e0"></div>
<div class="t" id="f_r32" style="left:4.90px;top:522.25px;font-size:10.5px;letter-spacing:-0.144px;color:#4a4a4a;">32</div>
<div class="abs" style="left:2px;top:532.75px;width:18.500px;height:.8px;background:#e0e0e0"></div>
<div class="t" id="f_r33" style="left:4.90px;top:535.50px;font-size:10.5px;letter-spacing:-0.144px;color:#4a4a4a;">33</div>
<div class="abs" style="left:2px;top:546.00px;width:18.500px;height:.8px;background:#e0e0e0"></div>
<div class="t" id="f_r34" style="left:4.90px;top:548.75px;font-size:10.5px;letter-spacing:-0.144px;color:#4a4a4a;">34</div>
<div class="abs" style="left:2px;top:559.25px;width:18.500px;height:.8px;background:#e0e0e0"></div>
<div class="t" id="f_r35" style="left:4.90px;top:562.00px;font-size:10.5px;letter-spacing:-0.144px;color:#4a4a4a;">35</div>
<div class="abs" style="left:2px;top:572.50px;width:18.500px;height:.8px;background:#e0e0e0"></div>
<div class="t" id="f_r36" style="left:4.90px;top:575.25px;font-size:10.5px;letter-spacing:-0.144px;color:#4a4a4a;">36</div>
<div class="abs" style="left:2px;top:585.75px;width:18.500px;height:.8px;background:#e0e0e0"></div>
<div class="t" id="f_r37" style="left:4.90px;top:588.50px;font-size:10.5px;letter-spacing:-0.144px;color:#4a4a4a;">37</div>
<div class="abs" style="left:2px;top:599.00px;width:18.500px;height:.8px;background:#e0e0e0"></div>
<div class="t" id="f_r38" style="left:4.90px;top:601.75px;font-size:10.5px;letter-spacing:-0.144px;color:#4a4a4a;">38</div>
<div class="abs" style="left:2px;top:612.25px;width:18.500px;height:.8px;background:#e0e0e0"></div>
<div class="abs" style="left:2.200px;top:612.65px;width:18px;height:6.65px;overflow:hidden"><div class="t" style="left:3px;top:2.600px;font-size:10.500px;color:#4a4a4a;letter-spacing:-.2px">39</div></div>
<div class="t" id="f_c2b" style="left:51.70px;top:125.46px;font-size:10.4px;letter-spacing:-0.083px;color:#8c8c8c;">Type</div>
<div class="t" id="f_c3b" style="left:51.70px;top:138.71px;font-size:10.4px;letter-spacing:-0.124px;color:#8c8c8c;">Created</div>
<div class="t" id="f_c4b" style="left:51.70px;top:151.96px;font-size:10.4px;letter-spacing:-0.057px;color:#8c8c8c;">Updated</div>
<div class="t" id="f_c2c" style="left:125.60px;top:125.46px;font-size:10.4px;letter-spacing:-0.129px;color:#8c8c8c;">Impact Analysis &gt; Scenario Analysis &gt; Single</div>
<div class="t" id="f_c3c" style="left:125.60px;top:138.71px;font-size:10.4px;letter-spacing:-0.142px;color:#8c8c8c;">Friday, 23 January 2026 at 13:20</div>
<div class="t" id="f_c4c" style="left:125.60px;top:151.96px;font-size:10.4px;letter-spacing:-0.142px;color:#8c8c8c;">Friday, 23 January 2026 at 13:20</div>
<div class="abs" style="left:49px;top:188.85px;width:287.800px;height:13.45px;background:#7f7f7f"></div>
<div class="t" id="f_c7" style="left:51.70px;top:191.71px;font-size:10.4px;letter-spacing:-0.278px;color:#fff;font-weight:bold;-webkit-text-stroke:.2px #fff">Input</div>
<div class="abs" style="left:122.900px;top:202.90px;width:213.900px;height:13.05px;background:#dde8f5;border-bottom:1.100px solid #3f4a55"></div>
<div class="abs" style="left:122.900px;top:216.15px;width:213.900px;height:13.05px;background:#dde8f5;border-bottom:1.100px solid #3f4a55"></div>
<div class="t" id="f_c8b" style="left:51.70px;top:204.96px;font-size:10.4px;letter-spacing:-0.630px;-webkit-text-stroke:.2px #000;">Name</div>
<div class="t" id="f_c9b" style="left:51.70px;top:218.21px;font-size:10.4px;letter-spacing:-0.150px;-webkit-text-stroke:.2px #000;">Reference</div>
<div class="t" id="f_c8c" style="left:125.60px;top:204.96px;font-size:10.4px;letter-spacing:0.117px;-webkit-text-stroke:.2px #000;">Terminal Growth</div>
<div class="t" id="f_c9c" style="left:125.60px;top:218.21px;font-size:10.4px;letter-spacing:-0.263px;-webkit-text-stroke:.2px #000;">=Assumptions!C13</div>
<div class="abs" style="left:49px;top:241.85px;width:287.800px;height:13.45px;background:#ffc000"></div>
<div class="t" id="f_c11" style="left:51.70px;top:244.71px;font-size:10.4px;letter-spacing:-0.308px;font-weight:bold;-webkit-text-stroke:.2px #000;">Output</div>
<div class="abs" style="left:122.900px;top:255.90px;width:213.900px;height:13.05px;background:#dde8f5;border-bottom:1.100px solid #3f4a55"></div>
<div class="abs" style="left:122.900px;top:269.15px;width:213.900px;height:13.05px;background:#dde8f5;border-bottom:1.100px solid #3f4a55"></div>
<div class="t" id="f_c12b" style="left:51.70px;top:257.96px;font-size:10.4px;letter-spacing:-0.630px;-webkit-text-stroke:.2px #000;">Name</div>
<div class="t" id="f_c13b" style="left:51.70px;top:271.21px;font-size:10.4px;letter-spacing:-0.150px;-webkit-text-stroke:.2px #000;">Reference</div>
<div class="t" id="f_c12c" style="left:125.60px;top:257.96px;font-size:10.4px;letter-spacing:-0.034px;-webkit-text-stroke:.2px #000;">Enterprise Value</div>
<div class="t" id="f_c13c" style="left:125.60px;top:271.21px;font-size:10.4px;letter-spacing:-0.577px;-webkit-text-stroke:.2px #000;">=DCF!F30</div>
<div class="abs" style="left:19.800px;top:373.200px;width:31px;height:15.500px;border:1.400px solid #1e7b45;background:#fff"></div>
<div class="abs" style="left:46.900px;top:385.200px;width:4.600px;height:4.600px;background:#1e7b45;border:.8px solid #fff;border-right:none;border-bottom:none"></div>
<svg width="140" height="80" viewBox="350 198 140 80" style="left:350px;top:198px"><clipPath id="one"><path d="M428 218h16.900v38h-6.500v-14h-10.400z"/></clipPath><path d="M358.800 237.600l13.400-13.600v7.200h38v12.800h-38v7.200z" fill="#1a5f80" stroke="#0c2f44" stroke-width="1.300" stroke-linejoin="miter"/><circle cx="440.300" cy="237.600" r="31.600" fill="#1a5f80" stroke="#0c2f44" stroke-width="1.300"/><text x="440.500" y="250.700" text-anchor="middle" clip-path="url(#one)" font-size="37" font-weight="bold" fill="#fff" font-family="Liberation Sans, sans-serif">1</text></svg>
<div class="abs" style="left:0;top:619.300px;width:874px;height:18.700px;background:#ececec;border-top:1px solid #cfcfcf"></div>
<div class="abs" style="left:0;top:636.200px;width:874px;height:1.800px;background:#f2f2f2"></div>
<svg width="40" height="18" viewBox="0 620 40 18" style="left:0;top:620px"><path d="M16.200 625.300v6.800l-5-3.400z" fill="#c4c4c4"/><path d="M27.800 625.300v6.800l5.200-3.400z" fill="#3c3c3c"/></svg>
<div class="abs" style="left:44.00px;top:620.300px;width:1px;height:16px;background:#c9c9c9"></div>
<div class="abs" style="left:117.00px;top:620.300px;width:1px;height:16px;background:#c9c9c9"></div>
<div class="abs" style="left:178.75px;top:620.300px;width:1px;height:16px;background:#c9c9c9"></div>
<div class="abs" style="left:259.50px;top:620.300px;width:1px;height:16px;background:#c9c9c9"></div>
<div class="abs" style="left:325.00px;top:620.300px;width:1px;height:16px;background:#c9c9c9"></div>
<div class="abs" style="left:567.20px;top:620.300px;width:1px;height:16px;background:#c9c9c9"></div>
<div class="abs" style="left:655.40px;top:620.300px;width:1px;height:16px;background:#c9c9c9"></div>
<div class="abs" style="left:746.40px;top:620.300px;width:1px;height:16px;background:#c9c9c9"></div>
<div class="abs" style="left:822.90px;top:620.300px;width:1px;height:16px;background:#c9c9c9"></div>
<div class="abs" style="left:850.50px;top:620.300px;width:1px;height:16px;background:#c9c9c9"></div>
<div class="abs" style="left:383.500px;top:619.300px;width:93.800px;height:16.500px;background:#fff;border:1px solid #c6c6c6;border-top:none;border-radius:0 0 4px 4px"></div>
<div class="t" id="f_s_cover" style="left:57.50px;top:625.01px;font-size:9px;letter-spacing:-0.053px;color:#3a3a3a;-webkit-text-stroke:.15px #3a3a3a">Cover Page</div>
<div class="t" id="f_s_cont" style="left:130.50px;top:625.01px;font-size:9px;letter-spacing:0.027px;color:#3a3a3a;-webkit-text-stroke:.15px #3a3a3a">Contents</div>
<div class="t" id="f_s_ass" style="left:193.00px;top:625.01px;font-size:9px;letter-spacing:0.088px;color:#3a3a3a;-webkit-text-stroke:.15px #3a3a3a">Assumptions</div>
<div class="t" id="f_s_fin" style="left:272.00px;top:625.01px;font-size:9px;letter-spacing:-0.053px;color:#3a3a3a;-webkit-text-stroke:.15px #3a3a3a">Financials</div>
<div class="t" id="f_s_dcf" style="left:345.75px;top:625.01px;font-size:9px;letter-spacing:-0.417px;color:#3a3a3a;-webkit-text-stroke:.15px #3a3a3a">DCF</div>
<div class="t" id="f_s_h7q" style="left:397.50px;top:625.01px;font-size:9px;letter-spacing:-0.181px;color:#1d7a43;font-weight:bold">f_Scenario_H7q</div>
<div class="t" id="f_s_v5d" style="left:490.50px;top:625.01px;font-size:9px;letter-spacing:-0.075px;color:#3a3a3a;-webkit-text-stroke:.15px #3a3a3a">f_Scenario_V5d</div>
<div class="t" id="f_s_h0f" style="left:581.00px;top:625.01px;font-size:9px;letter-spacing:-0.053px;color:#3a3a3a;-webkit-text-stroke:.15px #3a3a3a">f_Scenario_H0f</div>
<div class="t" id="f_s_b1d" style="left:669.70px;top:625.01px;font-size:9px;letter-spacing:-0.053px;color:#3a3a3a;-webkit-text-stroke:.15px #3a3a3a">f_Scenario_B1d</div>
<div class="t" id="f_s_f5d" style="left:760.40px;top:625.01px;font-size:9px;letter-spacing:-0.103px;color:#3a3a3a;-webkit-text-stroke:.15px #3a3a3a">f_Scenario_F5d</div>
<div class="abs" style="left:800px;top:621px;width:23px;height:15px;background:linear-gradient(90deg,rgba(236,236,236,0),#ececec 85%)"></div>
<svg width="12" height="12" viewBox="832 623 12 12" style="left:832px;top:623px"><path d="M833.500 628.800h7.800M837.400 624.900v7.800" stroke="#333" stroke-width="1.300"/></svg>
<div class="abs" style="left:873px;top:101.800px;width:1px;height:536.200px;background:#c8c8c8"></div>
<div class="abs" style="left:874px;top:101.800px;width:206px;height:536.200px;background:#fbfcfd"></div>
<div class="abs" style="left:874px;top:121.500px;width:206px;height:32.500px;background:#f7f8fb"></div>
<div class="abs" style="left:874px;top:635.900px;width:206px;height:2.100px;background:#eeeeee"></div>
<div class="abs" style="left:1079.200px;top:101.800px;width:.8px;height:536.200px;background:#e4e4e4"></div>
<div class="abs" style="left:874px;top:101.800px;width:206px;height:19.700px;background:#ebebeb"></div>
<div class="t" id="f_p_title" style="left:885.80px;top:107.41px;font-size:11.8px;letter-spacing:0.024px;color:#1b1b1b;-webkit-text-stroke:.2px #1b1b1b">Fontics</div>
<div class="abs" style="left:874px;top:153.600px;width:206px;height:1px;background:#e6e9ef"></div>
<svg width="206" height="60" viewBox="874 100 206 60" style="left:874px;top:100px"><circle cx="1064.900" cy="111.700" r="5.200" fill="#636363"/><path d="M1062.700 109.500l4.400 4.400M1067.100 109.500l-4.400 4.400" stroke="#fff" stroke-width="1.200" stroke-linecap="round"/><g fill="none" stroke="#26408b" stroke-width="1.250" stroke-linecap="round" stroke-linejoin="round"><circle cx="902.600" cy="134.900" r="2.900"/><path d="M897.700 144.200v-1.200c0-2.400 1.900-3.700 4.200-3.700h1.800"/><path d="M909.800 138.500a1.200 1.200 0 0 1 1.700 1.700l-4.600 4.600-2.300.6.600-2.300z"/><circle cx="953.600" cy="138.300" r="6.500"/><path d="M951.700 136.400c.3-1.300 1.100-1.900 2-1.900 1.100 0 2 .8 2 1.800 0 1.400-2 1.600-2 3.200"/><path d="M953.700 141.900v.1"/><path d="M997.400 132.200h2.400l1.300 3.200-1.600 1.100c.7 1.500 1.900 2.900 3.600 3.700l1.200-1.600 3.200 1.300v2.500c0 .9-.7 1.600-1.600 1.600-5.600-.3-10-4.700-10.100-10.200 0-.9.700-1.600 1.600-1.600z"/></g><g fill="none" stroke="#a4262c" stroke-width="1.250" stroke-linecap="round"><path d="M1051.800 131.800v6"/><path d="M1048 134a6 6 0 1 0 7.600 0"/></g></svg>
<div class="t" id="f_p_analysis" style="left:885.80px;top:172.10px;font-size:10.8px;letter-spacing:-0.015px;color:#1b1b1b;-webkit-text-stroke:.25px #1b1b1b">Analysis</div>
<div class="t" id="f_p_assurance" style="left:950.20px;top:172.11px;font-size:10.7px;letter-spacing:0.011px;color:#5e7299;-webkit-text-stroke:.15px #5e7299">Assurance</div>
<div class="abs" style="left:880.200px;top:189px;width:195.200px;height:1px;background:#e1e5ee"></div>
<div class="abs" style="left:880.200px;top:188.300px;width:52px;height:1.900px;background:#26408b"></div>
<div class="card" style="left:880px;top:199px;width:196px;height:176px"></div>
<div class="t" id="f_p_cm" style="left:892.60px;top:212.40px;font-size:11.4px;letter-spacing:-0.009px;color:#111;-webkit-text-stroke:.25px #111">Create module</div>
<div class="t" id="f_p_sel" style="left:892.60px;top:229.00px;font-size:9.3px;letter-spacing:0.034px;color:#5e7299;-webkit-text-stroke:.15px #5e7299">Select a category, module, and item</div>
<div class="sel" style="left:939px;width:124.500px;height:21px;top:250px"></div>
<div class="t" id="f_p_l_Category" style="left:892.90px;top:256.61px;font-size:9.3px;letter-spacing:0.133px;color:#1b1b1b;-webkit-text-stroke:.4px #1b1b1b">Category</div>
<div class="t" id="f_p_v_Category" style="left:948.60px;top:256.61px;font-size:9.3px;letter-spacing:0.067px;color:#1b1b1b;-webkit-text-stroke:.15px #1b1b1b">Impact Analysis</div>
<div class="sel" style="left:939px;width:124.500px;height:20.5px;top:280px"></div>
<div class="t" id="f_p_l_Module" style="left:892.90px;top:285.81px;font-size:9.3px;letter-spacing:0.033px;color:#1b1b1b;-webkit-text-stroke:.4px #1b1b1b">Module</div>
<div class="t" id="f_p_v_Module" style="left:948.60px;top:285.81px;font-size:9.3px;letter-spacing:-0.005px;color:#1b1b1b;-webkit-text-stroke:.15px #1b1b1b">Scenario Analysis</div>
<div class="sel" style="left:939px;width:124.500px;height:21px;top:309px"></div>
<div class="t" id="f_p_l_Item" style="left:892.90px;top:315.20px;font-size:9.3px;letter-spacing:0.027px;color:#1b1b1b;-webkit-text-stroke:.4px #1b1b1b">Item</div>
<div class="t" id="f_p_v_Item" style="left:948.60px;top:315.20px;font-size:9.3px;letter-spacing:-0.024px;color:#1b1b1b;-webkit-text-stroke:.15px #1b1b1b">Single</div>
<svg width="20" height="80" viewBox="1040 250 20 80" style="left:1040px;top:250px"><path d="M1044.500 259.0l3.200 3.200 3.200-3.200" fill="none" stroke="#555" stroke-width="1" stroke-linecap="round" stroke-linejoin="round"/><path d="M1044.500 288.4l3.200 3.200 3.200-3.200" fill="none" stroke="#555" stroke-width="1" stroke-linecap="round" stroke-linejoin="round"/><path d="M1044.500 318.0l3.200 3.200 3.200-3.200" fill="none" stroke="#555" stroke-width="1" stroke-linecap="round" stroke-linejoin="round"/></svg>
<div class="btn w" style="left:945.700px;top:341.900px;width:46.800px;height:20px"></div>
<div class="btn p" style="left:1004.600px;top:341.900px;width:58.700px;height:20px"></div>
<div class="t" id="f_p_reset1" style="left:957.00px;top:348.11px;font-size:9.3px;letter-spacing:-0.099px;color:#1b1b1b;-webkit-text-stroke:.4px #1b1b1b">Reset</div>
<div class="t" id="f_p_create" style="left:1019.50px;top:348.11px;font-size:9.3px;letter-spacing:0.116px;color:#fff;-webkit-text-stroke:.4px #fff">Create</div>
<div class="card" style="left:880px;top:382px;width:196px;height:109.500px"></div>
<div class="t" id="f_p_er" style="left:892.70px;top:395.31px;font-size:11.4px;letter-spacing:-0.078px;color:#111;-webkit-text-stroke:.25px #111">Evaluate results</div>
<div class="t" id="f_p_ef" style="left:892.70px;top:411.70px;font-size:9.3px;letter-spacing:-0.051px;color:#5e7299;-webkit-text-stroke:.15px #5e7299">Evaluate a Fontics module</div>
<div class="t" id="f_p_status" style="left:892.70px;top:435.50px;font-size:9.3px;letter-spacing:0.121px;color:#1b1b1b;-webkit-text-stroke:.4px #1b1b1b">Status:</div>
<div class="t" id="f_p_ready" style="left:927.50px;top:435.50px;font-size:9.3px;letter-spacing:-0.335px;color:#5e7299;-webkit-text-stroke:.15px #5e7299">Ready</div>
<div class="btn w" style="left:945.700px;top:459px;width:46.800px;height:20.200px"></div>
<div class="btn p" style="left:1004.500px;top:459px;width:58.700px;height:20.200px"></div>
<div class="t" id="f_p_reset2" style="left:957.00px;top:465.11px;font-size:9.3px;letter-spacing:-0.099px;color:#1b1b1b;-webkit-text-stroke:.4px #1b1b1b">Reset</div>
<div class="t" id="f_p_eval" style="left:1015.70px;top:465.11px;font-size:9.3px;letter-spacing:0.002px;color:#fff;-webkit-text-stroke:.4px #fff">Evaluate</div>
</body>
</html>
